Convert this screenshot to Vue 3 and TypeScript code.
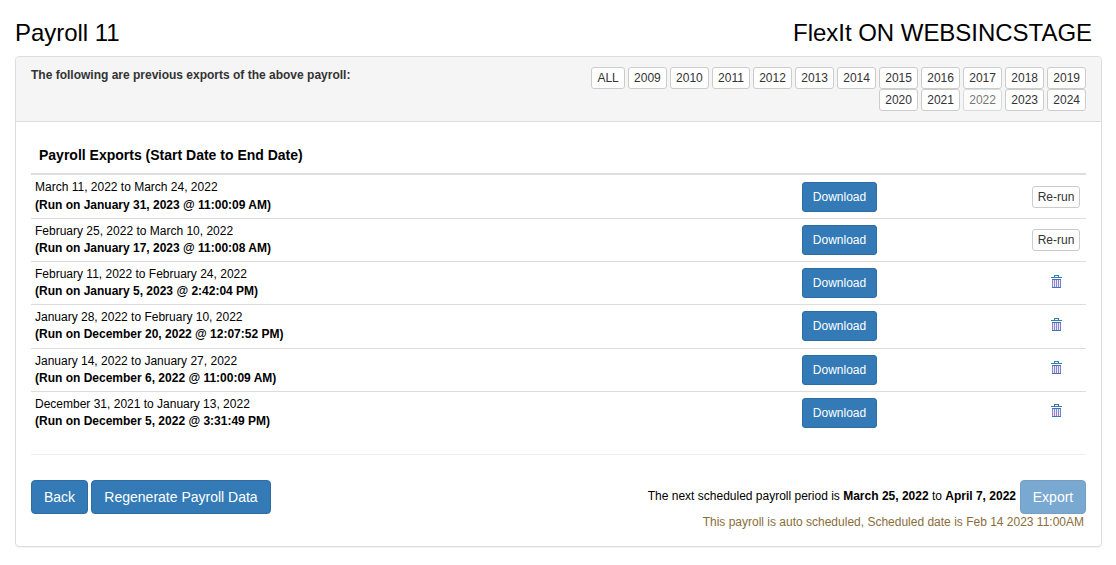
<script setup lang="ts">
interface PayrollExport {
  period: string
  run: string
  rerun: boolean
}

const years: string[] = ['ALL', ...Array.from({ length: 16 }, (_, i) => String(2009 + i))]
const yearRows: string[][] = [years.slice(0, 12), years.slice(12)]
const selectedYear = '2022'

const exportsList: PayrollExport[] = [
  { period: 'March 11, 2022 to March 24, 2022', run: '(Run on January 31, 2023 @ 11:00:09 AM)', rerun: true },
  { period: 'February 25, 2022 to March 10, 2022', run: '(Run on January 17, 2023 @ 11:00:08 AM)', rerun: true },
  { period: 'February 11, 2022 to February 24, 2022', run: '(Run on January 5, 2023 @ 2:42:04 PM)', rerun: false },
  { period: 'January 28, 2022 to February 10, 2022', run: '(Run on December 20, 2022 @ 12:07:52 PM)', rerun: false },
  { period: 'January 14, 2022 to January 27, 2022', run: '(Run on December 6, 2022 @ 11:00:09 AM)', rerun: false },
  { period: 'December 31, 2021 to January 13, 2022', run: '(Run on December 5, 2022 @ 3:31:49 PM)', rerun: false },
]
</script>

<template>
  <div class="page">
    <header class="title">
      <span class="title-left">Payroll 11</span>
      <span class="title-right">FlexIt ON WEBSINCSTAGE</span>
    </header>

    <section class="panel">
      <div class="panel-heading">
        <strong class="intro">The following are previous exports of the above payroll:</strong>
        <div class="years">
          <div v-for="(row, i) in yearRows" :key="i" class="year-row">
            <button
              v-for="year in row"
              :key="year"
              class="btn-xs"
              :class="{ all: year === 'ALL', narrow: year === '2011' }"
              :disabled="year === selectedYear"
            >{{ year }}</button>
          </div>
        </div>
      </div>

      <div class="panel-body">
        <div class="table-head">Payroll Exports (Start Date to End Date)</div>
        <div class="rows">
          <div v-for="item in exportsList" :key="item.run" class="table-row">
            <div class="info">
              <div class="period">{{ item.period }}</div>
              <strong class="run">{{ item.run }}</strong>
            </div>
            <div class="download"><button class="btn-primary small">Download</button></div>
            <div class="action">
              <button v-if="item.rerun" class="btn-xs rerun">Re-run</button>
              <svg v-else class="trash" width="11" height="13" viewBox="0 0 11 13">
                <path fill="#e3ecf8" d="M1 5h9v7H1z" />
                <path fill="#337ab7" d="M3 0h5v2h3v1H0V2h3zM4 1v1h3V1zM1 4h9v1H1zM1 12h9v1H1z" />
                <path fill="#9a80cc" d="M1 5h1v7H1zM3 5h1v7H3zM5 5h1v7H5zM7 5h1v7H7z" />
                <path fill="#6f86cc" d="M9 5h1v7H9z" />
              </svg>
            </div>
          </div>
        </div>

        <hr class="divider" />

        <footer class="actions">
          <div class="left">
            <button class="btn-primary back">Back</button>
            <button class="btn-primary regen">Regenerate Payroll Data</button>
          </div>
          <div class="right">
            <div class="next">
              <span class="next-text">The next scheduled payroll period is <strong>March 25, 2022</strong> to <strong>April 7, 2022</strong></span>
              <button class="btn-primary export" disabled>Export</button>
            </div>
            <div class="warning">This payroll is auto scheduled, Scheduled date is Feb 14 2023 11:00AM</div>
          </div>
        </footer>
      </div>
    </section>
  </div>
</template>

<style>
body {
  background: #fff;
}
</style>

<style scoped>
.page {
  box-sizing: border-box;
  width: 1116px;
  height: 565px;
  padding: 16px 14px 0 15px;
  overflow: hidden;
  color: #000;
  font: 12px/17px "Liberation Sans", Arial, sans-serif;
}
.title {
  display: flex;
  justify-content: space-between;
  height: 40px;
  padding-right: 10px;
  font-size: 24px;
  line-height: 34px;
  letter-spacing: -0.03px;
}
.panel {
  box-sizing: border-box;
  height: 491px;
  border: 1px solid #ddd;
  border-radius: 4px;
  box-shadow: 0 1px 1px rgba(0, 0, 0, 0.05);
}
.panel-heading {
  box-sizing: border-box;
  display: flex;
  justify-content: space-between;
  height: 65px;
  padding: 10px 15px;
  border-bottom: 1px solid #ddd;
  border-radius: 3px 3px 0 0;
  background: #f5f5f5;
  color: #333;
}
.year-row {
  display: flex;
  justify-content: flex-end;
  gap: 3.34px;
}
button {
  box-sizing: border-box;
  margin: 0;
  font-family: inherit;
  white-space: nowrap;
}
.btn-xs {
  width: 38.69px;
  height: 22px;
  padding: 0;
  border: 1px solid #ccc;
  border-radius: 3px;
  background: #fff;
  color: #333;
  font-size: 12px;
  line-height: 18px;
}
.btn-xs.narrow {
  width: 37.8px;
}
.btn-xs.all {
  width: 33.3px;
}
.btn-xs.rerun {
  width: 48px;
}
.btn-xs:disabled {
  opacity: 0.65;
}
.panel-body {
  padding: 15px;
}
.table-head {
  box-sizing: border-box;
  height: 38px;
  padding: 8px;
  border-bottom: 2px solid #ddd;
  font-size: 14px;
  font-weight: bold;
  line-height: 20px;
}
.table-row {
  box-sizing: border-box;
  display: grid;
  grid-template-columns: 771px 1fr 60px;
  height: 43px;
  border-top: 1px solid #ddd;
}
.table-row:first-child {
  border-top: 0;
}
.table-row:nth-child(4) {
  height: 44px;
}
.info {
  padding: 4px;
}
.run {
  display: block;
}
.table-row:first-child .run {
  margin-top: 1px;
}
.download {
  padding-top: 6px;
}
.table-row:first-child .download {
  padding-top: 7px;
}
.action {
  display: flex;
  justify-content: center;
  align-items: flex-start;
  padding-top: 10px;
}
.table-row:first-child .action {
  padding-top: 11px;
}
.trash {
  display: block;
  margin: 3px 0 0 1px;
}
.table-row:nth-child(n + 5) .trash {
  margin-top: 2px;
}
.btn-primary {
  height: 34px;
  padding: 0;
  border: 1px solid #2e6da4;
  border-radius: 4px;
  background: #337ab7;
  color: #fff;
  font-size: 14px;
  line-height: 20px;
}
.btn-primary.small {
  width: 75px;
  height: 30px;
  border-radius: 3px;
  font-size: 12px;
  line-height: 18px;
}
.divider {
  height: 0;
  margin: 20px 0;
  border: 0;
  border-top: 1px solid #eee;
}
.actions {
  display: flex;
  justify-content: space-between;
  padding-top: 5px;
}
.left {
  display: flex;
  gap: 3px;
}
.back {
  width: 57px;
}
.regen {
  width: 180px;
}
.next {
  display: flex;
  gap: 4px;
  justify-content: flex-end;
  line-height: 32px;
}
.export {
  width: 66px;
}
.btn-primary:disabled {
  opacity: 0.65;
}
.warning {
  padding-right: 2px;
  color: #8a6d3b;
  text-align: right;
}
</style>
